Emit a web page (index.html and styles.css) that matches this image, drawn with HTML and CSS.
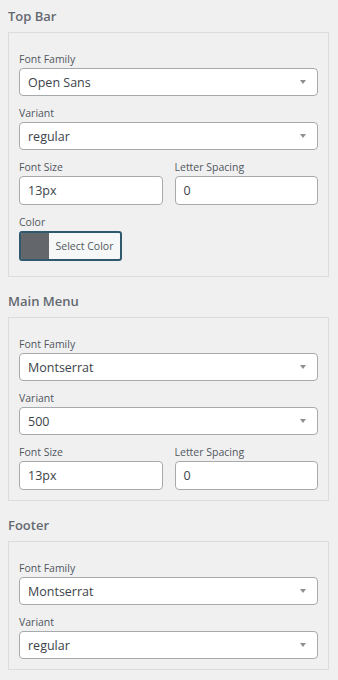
FILE: index.html
```html
<!DOCTYPE html>
<html lang="en">
<head>
<meta charset="utf-8">
<title>Typography</title>
<link rel="stylesheet" href="styles.css">
</head>
<body>
<div class="page">
  <section class="section">
    <h3 class="section-title">Top Bar</h3>
    <div class="panel">
      <div class="field">
        <label class="label">Font Family</label>
        <div class="select"><span class="select-text">Open Sans</span><span class="caret"></span></div>
      </div>
      <div class="field">
        <label class="label">Variant</label>
        <div class="select"><span class="select-text">regular</span><span class="caret"></span></div>
      </div>
      <div class="field row">
        <div class="col">
          <label class="label">Font Size</label>
          <div class="input">13px</div>
        </div>
        <div class="col">
          <label class="label">Letter Spacing</label>
          <div class="input">0</div>
        </div>
      </div>
      <div class="field color-field">
        <label class="label">Color</label>
        <button class="color-btn" type="button"><span class="swatch"></span><span class="color-text">Select Color</span></button>
      </div>
    </div>
  </section>

  <section class="section">
    <h3 class="section-title">Main Menu</h3>
    <div class="panel">
      <div class="field">
        <label class="label">Font Family</label>
        <div class="select"><span class="select-text">Montserrat</span><span class="caret"></span></div>
      </div>
      <div class="field">
        <label class="label">Variant</label>
        <div class="select"><span class="select-text">500</span><span class="caret"></span></div>
      </div>
      <div class="field row">
        <div class="col">
          <label class="label">Font Size</label>
          <div class="input">13px</div>
        </div>
        <div class="col">
          <label class="label">Letter Spacing</label>
          <div class="input">0</div>
        </div>
      </div>
    </div>
  </section>

  <section class="section">
    <h3 class="section-title">Footer</h3>
    <div class="panel">
      <div class="field">
        <label class="label">Font Family</label>
        <div class="select"><span class="select-text">Montserrat</span><span class="caret"></span></div>
      </div>
      <div class="field">
        <label class="label">Variant</label>
        <div class="select"><span class="select-text">regular</span><span class="caret"></span></div>
      </div>
    </div>
  </section>
</div>
</body>
</html>
```

FILE: styles.css
```css
html, body {
  margin: 0;
  padding: 0;
  background: #f0f0f1;
}
body {
  font-family: "Open Sans", "Noto Sans", sans-serif;
  color: #50575e;
}
.page {
  display: flex;
  flex-direction: column;
  gap: 8px;
  padding: 0 9px 0 8px;
}
.section {
  display: flex;
  flex-direction: column;
}
.section-title {
  margin: 6px 0 6px;
  font-size: 13px;
  line-height: 20px;
  font-weight: 600;
  color: #646970;
}
.panel {
  border: 1px solid #dcdcde;
  padding: 19px 10px 0;
}
.field {
  margin-bottom: 10px;
}
.row {
  display: grid;
  grid-template-columns: 1fr 1fr;
  column-gap: 12px;
}
.label {
  display: block;
  font-size: 10.5px;
  line-height: 14px;
  margin-bottom: 2px;
  color: #50575e;
}
.select {
  height: 28px;
  box-sizing: border-box;
  border: 1px solid #a7aaad;
  border-radius: 4px;
  background: #fff;
  display: flex;
  align-items: center;
  justify-content: space-between;
  padding: 0 8px 0 8px;
}
.select-text, .input {
  font-size: 12.5px;
  color: #3c434a;
}
.caret {
  width: 0;
  height: 0;
  border-left: 3.5px solid transparent;
  border-right: 3.5px solid transparent;
  border-top: 4px solid #8c8f94;
  margin-right: 3px;
}
.input {
  height: 29px;
  box-sizing: border-box;
  border: 1px solid #a7aaad;
  border-radius: 4px;
  background: #fff;
  display: flex;
  align-items: center;
  padding: 0 8px;
}
.color-field {
  margin-bottom: 15px;
}
.color-btn {
  display: flex;
  align-items: stretch;
  height: 30px;
  width: 103px;
  padding: 0;
  border: 2px solid #2f5a6e;
  border-radius: 3px;
  background: #f6f7f7;
  overflow: hidden;
  font-family: inherit;
}
.swatch {
  width: 28px;
  background: #63676b;
}
.color-text {
  flex: 1;
  display: flex;
  align-items: center;
  justify-content: center;
  font-size: 10.5px;
  color: #50575e;
}
```
